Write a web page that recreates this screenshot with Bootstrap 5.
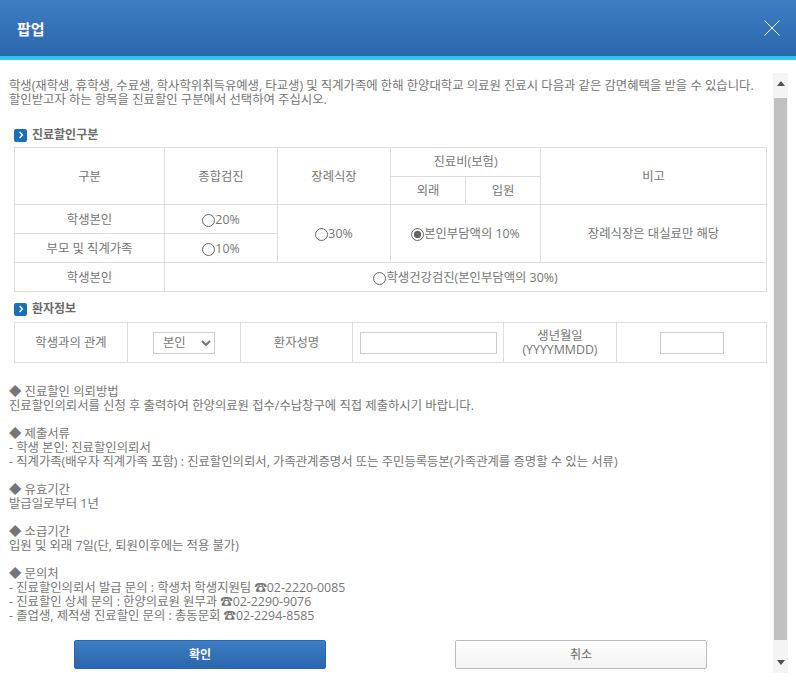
<!DOCTYPE html>
<html lang="ko">
<head>
<meta charset="utf-8">
<title>팝업</title>
<link rel="stylesheet" href="https://cdn.jsdelivr.net/npm/bootstrap@5.3.0/dist/css/bootstrap.min.css">
<style>
html,body{height:100%;overflow:hidden;background:#fff}
body{font-family:"Open Sans","Noto Sans CJK KR",sans-serif;font-size:12.35px;line-height:14px;color:#757575}
.pop-head{height:60px;background:linear-gradient(#3d7ec4,#2b66ab);border-bottom:4px solid #2fc3ee;padding:0 16px 0 17px}
.pop-title{font-size:15px;font-weight:700;color:#fff;line-height:20px;margin:0;padding-top:1px}
.pop-close{background:none;border:0;padding:0;width:18px;height:18px;line-height:0;margin-right:-1px}
.pop-main{height:612px;padding-top:13px}
.pop-content{width:773px;padding:6px 0 0 9px;overflow:hidden}
.intro{margin:0;height:28px;white-space:nowrap}
.sec-title{font-size:12px;font-weight:700;color:#6a6a6a;line-height:16px;margin:0;padding-left:5px;gap:5px}
.sec-ico{width:13px;height:13px;background:#1b6fb8;border-radius:2px;flex:none}
.sec-one{margin-top:20px}
.sec-two{margin-top:9px}
.grid-tbl{width:752px;margin:4px 0 0 5px;border-collapse:collapse;table-layout:fixed;font-size:12.35px}
.grid-tbl td{border:1px solid #ddd;text-align:center;vertical-align:middle;padding:0;color:#757575}
.grid-a tr{height:29px}
.grid-a .row-top{height:28px}
.grid-a .cell-low{padding-top:2px}
.grid-a .cell-mid{padding-top:1px}
.grid-b{margin-top:5px}
.grid-b tr{height:40px}
.radio-ico{display:inline-block;width:13px;height:13px;border:1px solid #666;border-radius:50%;vertical-align:-3px;background:#fff}
.radio-on{background:radial-gradient(circle,#666 0 3.4px,#fff 4px)}
.sel-box{width:62px;height:22px;border:1px solid #ccc;padding:0 5px;color:#757575;background:#fff;line-height:20px;font-size:12.35px}
.txt-box{height:22px;border:1px solid #ccc;background:#fff;display:block;margin:0 auto;padding:0}
.w-name{width:137px}
.w-birth{width:64px}
.notes{margin:22px 0 0;height:255px}
.pop-foot{padding-left:65px;padding-right:66px}
.btn-ok,.btn-no{width:252px;height:29px;padding:0;font-size:12px;line-height:27px;border-radius:2px}
.btn-ok{background:linear-gradient(#3d7ec4,#2b66ab);border:1px solid #2b66ab;color:#fff;font-weight:700}
.btn-no{background:linear-gradient(#fff,#f3f3f3);border:1px solid #bbb;color:#666}
.fake-bar{width:15px;height:600px;background:#f4f4f4;flex:none}
.bar-end{height:25px;line-height:0;flex:none}
.bar-end-b{height:33px}
.bar-thumb{flex:1;background:#c1c1c1;margin:0 1px}
</style>
</head>
<body>
<header class="pop-head d-flex align-items-center justify-content-between">
  <h1 class="pop-title">팝업</h1>
  <button type="button" class="pop-close" aria-label="닫기">
    <svg width="18" height="18" viewBox="0 0 18 18"><path d="M1.5 1.5 16.5 16.5M16.5 1.5 1.5 16.5" stroke="#fff" stroke-width="1" fill="none"/></svg>
  </button>
</header>
<div class="pop-main d-flex align-items-start">
  <div class="pop-content">
    <p class="intro">학생(재학생, 휴학생, 수료생, 학사학위취득유예생, 타교생) 및 직계가족에 한해 한양대학교 의료원 진료시 다음과 같은 감면혜택을 받을 수 있습니다.<br>할인받고자 하는 항목을 진료할인 구분에서 선택하여 주십시오.</p>

    <h2 class="sec-title sec-one d-flex align-items-center">
      <span class="sec-ico d-flex align-items-center justify-content-center"><svg width="8" height="8" viewBox="0 0 8 8"><path d="M2.6 1 5.4 4 2.6 7" stroke="#fff" stroke-width="1.4" fill="none"/></svg></span>진료할인구분
    </h2>
    <table class="grid-tbl grid-a">
      <colgroup><col style="width:150px"><col style="width:113px"><col style="width:113px"><col style="width:75px"><col style="width:75px"><col style="width:226px"></colgroup>
      <tr><td rowspan="2" class="cell-low">구분</td><td rowspan="2" class="cell-low">종합검진</td><td rowspan="2" class="cell-low">장례식장</td><td colspan="2">진료비(보험)</td><td rowspan="2" class="cell-low">비고</td></tr>
      <tr class="row-top"><td>외래</td><td>입원</td></tr>
      <tr><td class="cell-mid">학생본인</td><td class="cell-mid"><span class="radio-ico"></span>20%</td><td rowspan="2" class="cell-mid"><span class="radio-ico"></span>30%</td><td rowspan="2" colspan="2" class="cell-mid"><span class="radio-ico radio-on"></span>본인부담액의 10%</td><td rowspan="2" class="cell-mid">장례식장은 대실료만 해당</td></tr>
      <tr><td class="cell-mid">부모 및 직계가족</td><td class="cell-mid"><span class="radio-ico"></span>10%</td></tr>
      <tr><td class="cell-mid">학생본인</td><td colspan="5" class="cell-mid"><span class="radio-ico"></span>학생건강검진(본인부담액의 30%)</td></tr>
    </table>

    <h2 class="sec-title sec-two d-flex align-items-center">
      <span class="sec-ico d-flex align-items-center justify-content-center"><svg width="8" height="8" viewBox="0 0 8 8"><path d="M2.6 1 5.4 4 2.6 7" stroke="#fff" stroke-width="1.4" fill="none"/></svg></span>환자정보
    </h2>
    <table class="grid-tbl grid-b">
      <colgroup><col style="width:113px"><col style="width:113px"><col style="width:112px"><col style="width:151px"><col style="width:113px"><col style="width:150px"></colgroup>
      <tr>
        <td>학생과의 관계</td>
        <td><select class="sel-box" aria-label="학생과의 관계"><option>본인</option></select></td>
        <td>환자성명</td>
        <td><input type="text" class="txt-box w-name" aria-label="환자성명"></td>
        <td>생년월일<br>(YYYYMMDD)</td>
        <td><input type="text" class="txt-box w-birth" aria-label="생년월일"></td>
      </tr>
    </table>

    <p class="notes">◆ 진료할인 의뢰방법<br>
진료할인의뢰서를 신청 후 출력하여 한양의료원 접수/수납창구에 직접 제출하시기 바랍니다.<br><br>
◆ 제출서류<br>
- 학생 본인: 진료할인의뢰서<br>
- 직계가족(배우자 직계가족 포함) : 진료할인의뢰서, 가족관계증명서 또는 주민등록등본(가족관계를 증명할 수 있는 서류)<br><br>
◆ 유효기간<br>
발급일로부터 1년<br><br>
◆ 소급기간<br>
입원 및 외래 7일(단, 퇴원이후에는 적용 불가)<br><br>
◆ 문의처<br>
- 진료할인의뢰서 발급 문의 : 학생처 학생지원팀 ☎02-2220-0085<br>
- 진료할인 상세 문의 : 한양의료원 원무과 ☎02-2290-9076<br>
- 졸업생, 제적생 진료할인 문의 : 총동문회 ☎02-2294-8585</p>

    <div class="pop-foot d-flex justify-content-between">
      <button type="button" class="btn btn-ok">확인</button>
      <button type="button" class="btn btn-no">취소</button>
    </div>
  </div>
  <aside class="fake-bar d-flex flex-column">
    <div class="bar-end d-flex justify-content-center pt-2"><svg width="8" height="5" viewBox="0 0 8 5"><path d="M4 0 8 5H0Z" fill="#505050"/></svg></div>
    <div class="bar-thumb"></div>
    <div class="bar-end bar-end-b d-flex justify-content-center align-items-end pb-2"><svg width="8" height="5" viewBox="0 0 8 5"><path d="M0 0H8L4 5Z" fill="#505050"/></svg></div>
  </aside>
</div>
<script src="https://cdn.jsdelivr.net/npm/bootstrap@5.3.0/dist/js/bootstrap.bundle.min.js"></script>
</body>
</html>
